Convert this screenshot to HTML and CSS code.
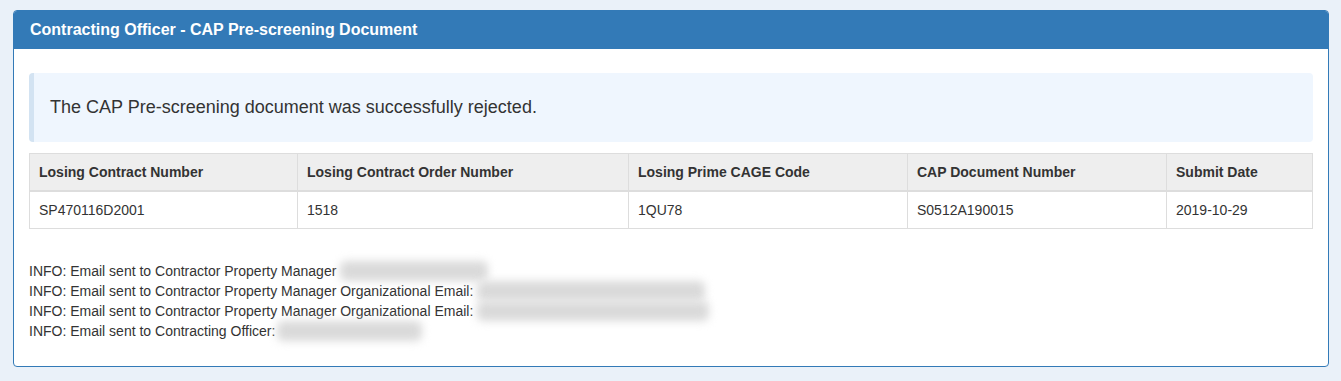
FILE: index.html
```html
<!DOCTYPE html>
<html lang="en">
<head>
    <meta charset="UTF-8">
    <title>Contracting Officer - CAP Pre-screening Document</title>
    <link rel="stylesheet" href="styles.css">
</head>
<body>
    <div class="panel">
        <div class="panel-heading">Contracting Officer - CAP Pre-screening Document</div>
        <div class="panel-body">
            <div class="alert">The CAP Pre-screening document was successfully rejected.</div>

            <table class="results">
                <colgroup>
                    <col class="c1"><col class="c2"><col class="c3"><col class="c4"><col class="c5">
                </colgroup>
                <thead>
                    <tr>
                        <th>Losing Contract Number</th>
                        <th>Losing Contract Order Number</th>
                        <th>Losing Prime CAGE Code</th>
                        <th>CAP Document Number</th>
                        <th>Submit Date</th>
                    </tr>
                </thead>
                <tbody>
                    <tr>
                        <td>SP470116D2001</td>
                        <td>1518</td>
                        <td>1QU78</td>
                        <td>S0512A190015</td>
                        <td>2019-10-29</td>
                    </tr>
                </tbody>
            </table>

            <div class="messages">
                <div class="msg">INFO: Email sent to Contractor Property Manager<span class="redact r1"></span></div>
                <div class="msg">INFO: Email sent to Contractor Property Manager Organizational Email:<span class="redact r2"></span></div>
                <div class="msg">INFO: Email sent to Contractor Property Manager Organizational Email:<span class="redact r3"></span></div>
                <div class="msg">INFO: Email sent to Contracting Officer:<span class="redact r4"></span></div>
            </div>
        </div>
    </div>
</body>
</html>
```

FILE: styles.css
```css
body {
    margin: 0;
    padding: 10px 12px 0 13px;
    background: #eaf1f9;
    font-family: "Liberation Sans", Arial, sans-serif;
    color: #333;
}

.panel {
    background: #fff;
    border: 1px solid #337ab7;
    border-radius: 4px;
    overflow: hidden;
}

.panel-heading {
    background: #337ab7;
    color: #fff;
    font-weight: bold;
    font-size: 16px;
    line-height: 19px;
    padding: 9px 16px 10px;
}

.panel-body {
    padding: 24px 15px 25px;
}

.alert {
    background: #eff6fe;
    border-left: 5px solid #d3e3f2;
    border-radius: 4px;
    padding: 21px 16px;
    font-size: 18px;
    line-height: 27px;
    color: #333;
}

.results {
    width: 100%;
    margin-top: 11px;
    border-collapse: collapse;
    table-layout: fixed;
    border: 1px solid #ddd;
    font-size: 14px;
}

.c1 { width: 268px; }
.c2 { width: 331px; }
.c3 { width: 279px; }
.c4 { width: 259px; }

.results th,
.results td {
    text-align: left;
    padding: 0 9px;
    border: 1px solid #ddd;
    height: 36px;
}

.results th {
    background: #eee;
    font-weight: bold;
    border-bottom: 2px solid #ddd;
}

.messages {
    margin-top: 32px;
    font-size: 14px;
    line-height: 20px;
}

.msg {
    white-space: nowrap;
    height: 20px;
}

.redact {
    display: inline-block;
    vertical-align: top;
    height: 20px;
    background: #dadada;
    filter: blur(4px);
    border-radius: 6px;
}

.r1 { width: 148px; margin-left: 4px; }
.r2 { width: 228px; margin-left: 4px; }
.r3 { width: 232px; margin-left: 4px; }
.r4 { width: 145px; margin-left: 2px; }
```
